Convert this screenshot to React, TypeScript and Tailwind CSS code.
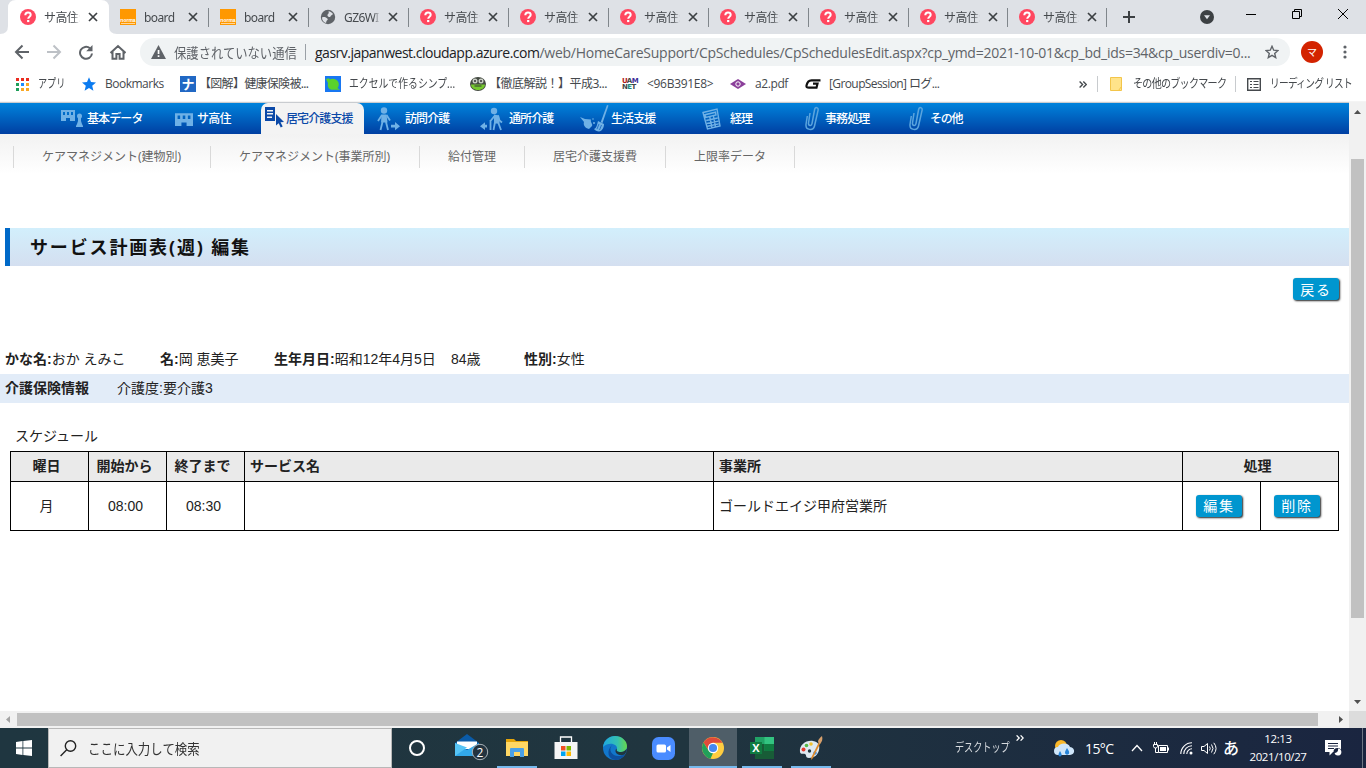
import type { ReactNode } from "react";

type Favicon = "help" | "board" | "globe";

type Tab = { icon: Favicon; title: string; width: string };

const TABS: Tab[] = [
  { icon: "help", title: "サ高住:", width: "w-[100px]" },
  { icon: "board", title: "board", width: "w-[100px]" },
  { icon: "board", title: "board", width: "w-[100px]" },
  { icon: "globe", title: "GZ6WI", width: "w-[100px]" },
  { icon: "help", title: "サ高住:", width: "w-[100px]" },
  { icon: "help", title: "サ高住:", width: "w-[100px]" },
  { icon: "help", title: "サ高住:", width: "w-[100px]" },
  { icon: "help", title: "サ高住:", width: "w-[100px]" },
  { icon: "help", title: "サ高住:", width: "w-[100px]" },
  { icon: "help", title: "サ高住:", width: "w-[99px]" },
  { icon: "help", title: "サ高住:", width: "w-[99px]" },
];

const SUB_MENU = [
  { label: "ケアマネジメント(建物別)", width: "w-[197px]" },
  { label: "ケアマネジメント(事業所別)", width: "w-[209px]" },
  { label: "給付管理", width: "w-[105px]" },
  { label: "居宅介護支援費", width: "w-[141px]" },
  { label: "上限率データ", width: "w-[129px]" },
];

function FaviconIcon({ type }: { type: Favicon }) {
  if (type === "board") {
    return (
      <span className="flex h-4 w-4 shrink-0 flex-col items-center justify-end bg-[#ff9800] pb-[1px] font-['Liberation_Sans'] text-[5px] leading-[6px] font-bold text-white">
        <span>norma</span>
        <span className="h-px w-3.5 bg-[#ffd699]" />
      </span>
    );
  }
  if (type === "globe") {
    return (
      <svg width="16" height="16" viewBox="0 0 16 16" className="shrink-0">
        <circle cx="8" cy="8" r="7.2" fill="#5f6368" />
        <path d="M2 8.500c2-1 3.500-.3 5 .8 1.500 1 .5 2-.5 2.700l-.5 2C3.500 13.300 2 11.500 2 8.500zM8.500 2.200c2 .2 3.500 1.300 4.500 2.800-1 1.500-2 1-2.500 2.500C9.500 8.500 8 8 7.500 6.500 7 5 9.500 5 8.500 2.200z" fill="#dee1e6" />
      </svg>
    );
  }
  return (
    <svg width="16" height="16" viewBox="0 0 16 16" className="shrink-0">
      <circle cx="8" cy="8" r="8" fill="#ff4760" />
      <path d="M5.300 6.200C5.300 4.400 6.500 3.400 8 3.400s2.700 1 2.700 2.400c0 1.900-2.500 2-2.500 4" fill="none" stroke="#fff" strokeWidth="2" />
      <rect x="7.100" y="11" width="2.200" height="2.100" fill="#fff" />
    </svg>
  );
}

function CloseIcon() {
  return (
    <svg width="10" height="10" viewBox="0 0 10 10" className="shrink-0">
      <path d="M1 1l8 8M9 1L1 9" stroke="#3c4043" strokeWidth="1.700" />
    </svg>
  );
}

function TabStrip() {
  return (
    <div className="flex h-[34px] bg-[#dee1e6] pl-2 text-xs text-[#45494d]">
      {TABS.map((tab, i) => (
        <div key={i} className={`relative flex h-[34px] shrink-0 items-center pl-3 ${tab.width}`}>
          {i === 0 && (
            <svg width="117" height="34" viewBox="0 0 117 34" className="absolute top-0 -left-2">
              <path d="M0 34Q8 34 8 26V8Q8 0 16 0H101Q109 0 109 8V26Q109 34 117 34Z" fill="#fff" />
            </svg>
          )}
          {i > 1 && <span className="absolute top-2 left-0 h-[19px] w-px bg-[#80868b]" />}
          <span className="relative flex">
            <FaviconIcon type={tab.icon} />
          </span>
          <span className="relative ml-2 w-[36px] mask-r-from-82% mask-r-to-100% pt-0.5 leading-4 tracking-[-0.6px] whitespace-nowrap">
            {tab.title}
          </span>
          <span className="relative ml-2 flex">
            <CloseIcon />
          </span>
        </div>
      ))}
      <div className="flex flex-1 items-center">
        <span className="h-[19px] w-px bg-[#80868b]" />
        <svg width="12" height="12" viewBox="0 0 12 12" className="ml-4">
          <path d="M6 0v12M0 6h12" stroke="#3c4043" strokeWidth="2" />
        </svg>
        <svg width="14" height="14" viewBox="0 0 14 14" className="ml-[65px]">
          <circle cx="7" cy="7" r="7" fill="#3c4043" />
          <path d="M4 5.200h6L7 9.200z" fill="#dee1e6" />
        </svg>
        <svg width="104" height="12" viewBox="0 0 104 12" className="mb-1.5 ml-8 fill-none stroke-black" strokeWidth="1">
          <path d="M0 6.500h10M46.500 3.500h7v7h-7zM48.500 3.500v-2h7v7h-2M92 1l10 10M102 1l-10 10" />
        </svg>
      </div>
    </div>
  );
}

function Toolbar() {
  return (
    <div className="flex h-9 items-center pl-[14px]">
      <svg width="112" height="16" viewBox="0 0 112 16" fill="none" stroke="#5f6368" strokeWidth="2">
        <path d="M15 8H2M8.500 1.500L2 8l6.500 6.500" />
        <path d="M33 8h13M39.500 1.500L46 8l-6.500 6.500" stroke="#bdc1c6" />
        <path d="M76 4.300A6 6 0 1078 9.500" />
        <path d="M78.500 1v6.300h-6.300z" fill="#5f6368" stroke="none" />
        <path d="M98.500 7.500v7.300h3.900V10h3.200v4.800h3.900V7.500M96.500 9L104 2l7.500 7" />
      </svg>
      <div className="ml-[14px] flex h-7 w-[1150px] items-center rounded-full bg-[#f0f3f4] pl-[11px] text-[14px] text-[#5f6368]">
        <svg width="15" height="14" viewBox="0 0 15 14">
          <path d="M7.500 0L15 14H0z" fill="#5f6368" />
          <path d="M6.700 5h1.700v4H6.700zM6.700 10.300h1.700v1.600H6.700z" fill="#fff" />
        </svg>
        <span className="ml-2 w-[123px] origin-left scale-x-[.88] whitespace-nowrap">保護されていない通信</span>
        <span className="ml-2 h-4 w-px bg-[#9aa0a6]" />
        <span className="ml-[9px] w-[935px] font-['Open_Sans'] text-[14px] tracking-[-0.26px] whitespace-nowrap">
          <span className="tracking-[-0.5px] text-[#202124]">gasrv.japanwest.cloudapp.azure.com</span>
          /web/HomeCareSupport/CpSchedules/CpSchedulesEdit.aspx?cp_ymd=2021-10-01&amp;cp_bd_ids=34&amp;cp_userdiv=0...
        </span>
        <svg width="14" height="14" viewBox="0 0 14 14" className="ml-[15px]" fill="none" stroke="#5f6368" strokeWidth="1.400">
          <path d="M7 1.300l1.700 3.900 4.200.4-3.200 2.800 1 4.200L7 10.400l-3.700 2.200 1-4.200L1.100 5.600l4.200-.4z" />
        </svg>
      </div>
      <span className="ml-[11px] flex h-[22px] w-[22px] items-center justify-center rounded-full bg-[#d32300] text-[10px] text-white">マ</span>
      <svg width="4" height="14" viewBox="0 0 4 14" className="ml-5" fill="#5f6368">
        <circle cx="2" cy="2" r="1.600" />
        <circle cx="2" cy="7" r="1.600" />
        <circle cx="2" cy="12" r="1.600" />
      </svg>
    </div>
  );
}

function Bookmark({ icon, label, width, text = "" }: { icon: ReactNode; label: string; width: string; text?: string }) {
  return (
    <div className={`flex shrink-0 items-center gap-2 whitespace-nowrap ${width}`}>
      <span className="flex w-4 shrink-0 justify-center">{icon}</span>
      <span className={text}>{label}</span>
    </div>
  );
}

function BookmarksBar() {
  return (
    <div className="flex h-8 items-center border-b border-[#f4f4f4] pb-[3px] pl-[14px] text-xs text-[#45494d]">
      <Bookmark
        width="w-[67px]"
        text="origin-left scale-x-[.76]"
        label="アプリ"
        icon={
          <svg width="13" height="13" viewBox="0 0 13 13">
            <path d="M0 0h3v3H0zM5 0h3v3H5zM10 0h3v3h-3z" fill="#ea2b1f" />
            <path d="M0 5h3v3H0zM0 10h3v3H0z" fill="#1e9e5a" />
            <path d="M5 5h3v3H5z" fill="#1a8cff" />
            <path d="M10 5h3v3h-3zM5 10h3v3H5zM10 10h3v3h-3z" fill="#f9a825" />
          </svg>
        }
      />
      <Bookmark
        width="w-[99px]"
        text="font-['Open_Sans'] tracking-[-0.5px]"
        label="Bookmarks"
        icon={
          <svg width="14" height="14" viewBox="0 0 14 14">
            <path d="M7 .3l2 4.800 5 .4-3.800 3.300 1.200 5L7 11.100l-4.400 2.700 1.200-5L0 5.500l5-.4z" fill="#0b7bf0" />
          </svg>
        }
      />
      <Bookmark
        width="w-[145px]"
        text="-ml-[5px] tracking-[-0.7px]"
        label="【図解】健康保険被..."
        icon={<span className="flex h-4 w-4 items-center justify-center bg-[#2168c4] text-[13px] leading-4 font-bold text-white">ナ</span>}
      />
      <Bookmark
        width="w-[145px]"
        text="origin-left scale-x-[.82]"
        label="エクセルで作るシンプ..."
        icon={
          <svg width="16" height="16" viewBox="0 0 16 16">
            <path d="M0 0h16v16H0z" fill="#1877f2" />
            <path d="M1 3l3-.8.800 1.300C7 2 12 2.500 13.500 6.500c.8 2.500 0 4.500-1 5.500l2.500 1.800H8C4 14 2 11 3 7z" fill="#5ad22b" />
          </svg>
        }
      />
      <Bookmark
        width="w-[152px]"
        text="-ml-[5px] tracking-[-0.5px]"
        label="【徹底解説！】平成3..."
        icon={
          <svg width="16" height="14" viewBox="0 0 16 14">
            <ellipse cx="8" cy="7" rx="8" ry="7" fill="#444a41" />
            <circle cx="5" cy="4" r="2.500" fill="#c9cec5" />
            <circle cx="11" cy="4" r="2.500" fill="#c9cec5" />
            <path d="M1 7.500h14c0 3-3 5.500-7 5.500S1 10.500 1 7.500z" fill="#75c92e" />
            <path d="M4.500 8.500h7v1h-7z" fill="#333" />
            <circle cx="5" cy="4" r="1" fill="#333" />
            <circle cx="11" cy="4" r="1" fill="#333" />
          </svg>
        }
      />
      <Bookmark
        width="w-[108px]"
        text="ml-px font-['Open_Sans'] tracking-[-0.3px]"
        label="<96B391E8>"
        icon={
          <span className="flex flex-col font-['DejaVu_Sans'] text-[7px] leading-[6px] font-bold tracking-[-0.6px] text-[#444]">
            <span><span className="text-[#b01818]">U</span>A<span className="text-[#3d2d9a]">M</span></span>
            <span>N<span className="text-[#178a7c]">E</span>T</span>
          </span>
        }
      />
      <Bookmark
        width="w-[75px]"
        text="ml-px font-['Open_Sans'] tracking-[-0.4px]"
        label="a2.pdf"
        icon={
          <svg width="16" height="10" viewBox="0 0 16 10">
            <path d="M0 5l8-5 8 5-8 5z" fill="#8b3f9a" />
            <circle cx="8" cy="5" r="2.200" fill="none" stroke="#fff" strokeWidth="1" />
          </svg>
        }
      />
      <Bookmark
        width="w-[274px]"
        text="font-['Open_Sans','Noto_Sans_CJK_JP'] tracking-[-0.6px]"
        label="[GroupSession] ログ..."
        icon={
          <svg width="16" height="10" viewBox="0 0 16 10">
            <path d="M15.500 1.300H6.500C3.500 1.300 2 4 1.500 6.500 1.200 8.200 2 8.700 4 8.700h7.500l1-4H8" fill="none" stroke="#111" strokeWidth="2.200" />
          </svg>
        }
      />
      <svg width="8" height="7" viewBox="0 0 8 7" className="mr-[10px]" fill="none" stroke="#45494d" strokeWidth="1.400">
        <path d="M.6.500l3 3-3 3M4.300.500l3 3-3 3" />
      </svg>
      <span className="h-4 w-px bg-[#c8cbce]" />
      <svg width="12" height="14" viewBox="0 0 12 14" className="ml-3">
        <path d="M.5.500h11v13H.5z" fill="#ffe38a" stroke="#f3c54a" />
        <path d="M8.500 13.500l3-4" stroke="#f3c54a" />
      </svg>
      <span className="ml-[11px] w-[93px] origin-left scale-x-[.84] tracking-[-0.9px] whitespace-nowrap">その他のブックマーク</span>
      <span className="ml-[9px] h-4 w-px bg-[#c8cbce]" />
      <svg width="14" height="13" viewBox="0 0 14 13" className="ml-[11px]" fill="none" stroke="#45494d">
        <path d="M.7.700h12.600v11.600H.7z" strokeWidth="1.400" />
        <path d="M3 3.500h2M3 6.500h2M3 9.500h2M6.500 3.500h5M6.500 6.500h5M6.500 9.500h5" strokeWidth="1.200" />
      </svg>
      <span className="ml-[9px] w-[82px] origin-left scale-x-[.81] tracking-[-0.9px] whitespace-nowrap">リーディング リスト</span>
    </div>
  );
}

function NavItem({ width, pad, icon, label, text = "", active = false }: {
  width: string;
  pad: string;
  icon: ReactNode;
  label: string;
  text?: string;
  active?: boolean;
}) {
  return (
    <div className={`flex h-[31px] shrink-0 items-center ${width} ${active ? "rounded-t-[7px] bg-[#f3f3f3] pl-1 text-[#0b49a8]" : "text-white"}`}>
      <span className={`flex shrink-0 ${pad}`}>{icon}</span>
      <span className={`whitespace-nowrap ${text}`}>{label}</span>
    </div>
  );
}

function BuildingShape() {
  return <path d="M0 1h14v11h-5V9H5v3H0zM2 3v3h2V3zM6 3v3h2V3zM10 3v3h2V3z" fillRule="evenodd" />;
}

function ClipIcon() {
  return (
    <svg width="14" height="25" viewBox="0 0 14 25" fill="none" stroke="#5ba5de" strokeWidth="1.500">
      <path d="M5 7L3.500 17c-.4 3 3 3.500 3.500.7L9.500 4c.6-3.500 4.500-3 3.500.7L9.500 20c-1.200 5-9 4.500-8.500-1.500L2.300 10" />
    </svg>
  );
}

function MainNav() {
  return (
    <div className="flex h-8 items-start border-t border-[#c9ccd0] bg-linear-to-b from-[#0083dc] to-[#003fa2] pl-[61px] text-xs font-medium">
      <NavItem
        width="w-[114px]"
        pad="w-[26px]"
        label="基本データ"
        text="tracking-[-0.9px]"
        icon={
          <svg width="23" height="19" viewBox="0 0 23 19" fill="#6fb1e6">
            <BuildingShape />
            <circle cx="18.500" cy="7" r="2.500" />
            <path d="M17 9h3v3l1 3 1 2v1h-7v-1l1-2 1-3z" />
          </svg>
        }
      />
      <NavItem
        width="w-[86px]"
        pad="w-[22px]"
        label="サ高住"
        text="tracking-[-0.7px]"
        icon={
          <svg width="18" height="14" viewBox="0 0 14 12" preserveAspectRatio="none" fill="#6fb1e6">
            <BuildingShape />
          </svg>
        }
      />
      <NavItem
        active
        width="w-[103px] mr-[13px]"
        pad="w-[21px]"
        label="居宅介護支援"
        text="tracking-[-0.9px]"
        icon={
          <svg width="20" height="22" viewBox="0 0 20 22" className="mb-1" fill="#0b49a8">
            <path d="M0 1h10v14H0zM2 4v1.500h6V4zM2 7v1.500h6V7zM2 10.500V12h5v-1.500z" fillRule="evenodd" />
            <path d="M11 8l8 8-3.500.3 2.200 4.200-2 1-2-4.300L11 19.500z" />
          </svg>
        }
      />
      <NavItem
        width="w-[103px]"
        pad="w-[28px]"
        label="訪問介護"
        text="tracking-[-0.9px]"
        icon={
          <svg width="23" height="24" viewBox="0 0 23 24" fill="none" stroke="#6fb1e6" strokeWidth="1.800">
            <circle cx="7" cy="3.500" r="3.200" fill="#6fb1e6" stroke="none" />
            <path d="M4.500 7.500h5l1 8H4z" fill="#6fb1e6" stroke="none" />
            <path d="M5 8l-4 6M9.500 8l3.500 5.500M5.500 15l-2 8M9 15l2 8" />
            <path d="M14 17.800h4v-2.800l5 4.200-5 4v-2.700h-4z" fill="#6fb1e6" stroke="none" />
          </svg>
        }
      />
      <NavItem
        width="w-[102px]"
        pad="w-[29px]"
        label="通所介護"
        text="tracking-[-0.9px]"
        icon={
          <svg width="23" height="24" viewBox="0 0 23 24" fill="none" stroke="#6fb1e6" strokeWidth="1.800">
            <circle cx="14" cy="4" r="3.200" fill="#6fb1e6" stroke="none" />
            <path d="M14 7.500l5 1 .5 8h-5.500z" fill="#6fb1e6" stroke="none" />
            <path d="M14.500 9l-4 5M18 8.500l1.500 5 2.500 2M15 15l-1.500 8M18 15l3 8M10.500 13v10" />
            <path d="M7 17.800H5v-2.500l-5 3.900 5 3.800v-2.500h2z" fill="#6fb1e6" stroke="none" />
          </svg>
        }
      />
      <NavItem
        width="w-[120px]"
        pad="w-[29px]"
        label="生活支援"
        text="tracking-[-0.9px]"
        icon={
          <svg width="29" height="27" viewBox="0 0 29 27" className="-ml-0.5 shrink-0" fill="#6fb1e6">
            <path d="M0 12l5 2 6 .5c-1 3 2 4 1 6.500l-3 3C5 23 3 20 4 17z" />
            <circle cx="14" cy="18" r="1" />
            <circle cx="13" cy="14" r=".8" />
            <path d="M27 0l1.500.5L22.500 18l-1.800-.7z" />
            <path d="M18 16l6 3c0 4-2 7-5 7.500-2 0-4-1-5-2.500 3-1 3-5 4-8z" />
            <path d="M19 19l-2 5M21.500 20l-2 5" stroke="#0859b9" strokeWidth=".7" />
          </svg>
        }
      />
      <NavItem
        width="w-[103px]"
        pad="w-[28px]"
        label="経理"
        text="tracking-[-0.9px]"
        icon={
          <svg width="19" height="22" viewBox="0 0 19 22" fill="none" stroke="#6fb1e6" strokeWidth="1.400">
            <path d="M1 4.500l14-3.500 3 17L5.500 21zM3 6.700l10.500-2.500.5 2.800L3.800 9.500zM4.200 12.500l11.500-2.500M4.800 15.500l11.500-2.400M5.300 18.300l11.500-2.400M7.800 9l2.200 11M11.500 8.200l2 11" />
          </svg>
        }
      />
      <NavItem width="w-[104px]" pad="w-[20px]" label="事務処理" text="tracking-[-0.9px]" icon={<ClipIcon />} />
      <NavItem width="w-[60px]" pad="w-[21px]" label="その他" text="tracking-[-1.2px]" icon={<ClipIcon />} />
    </div>
  );
}

function SubNav() {
  return (
    <div className="flex h-10 items-center bg-linear-to-b from-[#f2f2f2] to-white pt-1.5 pl-[13px] text-xs text-[#666]">
      {SUB_MENU.map((item) => (
        <div key={item.label} className={`flex h-[22px] items-center border-l border-[#d9d9d9] pl-7 ${item.width}`}>
          <span className="whitespace-nowrap">{item.label}</span>
        </div>
      ))}
      <div className="h-[22px] w-px bg-[#d9d9d9]" />
    </div>
  );
}

function PageButton({ label }: { label: string }) {
  return (
    <button className="h-[22px] w-[46px] rounded-[3px] bg-[#0096cf] text-sm leading-[21px] tracking-[1.8px] text-white shadow-[1px_1px_2px_#222]">
      {label}
    </button>
  );
}

function SchedulePage() {
  return (
    <div className="flex h-[608px] w-[1349px] flex-col overflow-hidden bg-white text-[#222]">
      <MainNav />
      <SubNav />
      <h1 className="mt-[54px] ml-[5px] flex h-[38px] shrink-0 items-center border-l-5 border-[#0069c8] bg-linear-to-b from-[#d2effc] to-[#d4dff0] pl-5 text-lg font-bold tracking-[1.850px] text-[#111]">
        サービス計画表(週) 編集
      </h1>
      <div className="mt-3 flex justify-end pr-[10px]">
        <PageButton label="戻る" />
      </div>
      <div className="mt-[44px] flex h-[30px] shrink-0 items-center pl-[5px] font-['Liberation_Sans','Noto_Sans_CJK_JP',sans-serif] text-sm whitespace-nowrap">
        <div className="w-[155px]"><b>かな名:</b>おか えみこ</div>
        <div className="w-[114px]"><b>名:</b>岡 恵美子</div>
        <div className="w-[177px]"><b>生年月日:</b>昭和12年4月5日</div>
        <div className="w-[73px]">84歳</div>
        <div><b>性別:</b>女性</div>
      </div>
      <div className="flex h-[29px] shrink-0 items-center bg-[#e2ecf8] pb-0.5 pl-[5px] font-['Liberation_Sans','Noto_Sans_CJK_JP',sans-serif] text-sm">
        <b className="w-28">介護保険情報</b>
        <span>介護度:要介護3</span>
      </div>
      <div className="mt-[22px] pl-[15px] text-sm leading-[22px]">スケジュール</div>
      <table className="mt-1 ml-[10px] w-[1329px] table-fixed border-collapse font-['Liberation_Sans','Noto_Sans_CJK_JP',sans-serif] text-sm leading-5">
        <colgroup>
          <col className="w-[78px]" />
          <col className="w-[78px]" />
          <col className="w-[78px]" />
          <col className="w-[469px]" />
          <col className="w-[469px]" />
          <col className="w-[78px]" />
          <col className="w-[78px]" />
        </colgroup>
        <thead>
          <tr className="h-[30px] bg-[#eaeaea]">
            <th className="border border-black pr-1.5 pb-0.5">曜日</th>
            <th className="border border-black pr-1.5 pb-0.5">開始から</th>
            <th className="border border-black pr-1.5 pb-0.5">終了まで</th>
            <th className="border border-black pb-0.5 pl-[5px] text-left">サービス名</th>
            <th className="border border-black pb-0.5 pl-[5px] text-left">事業所</th>
            <th className="border border-black pr-1.5 pb-0.5" colSpan={2}>処理</th>
          </tr>
        </thead>
        <tbody>
          <tr className="h-[49px] text-center">
            <td className="border border-black pr-1.5">月</td>
            <td className="border border-black pr-1">08:00</td>
            <td className="border border-black pr-1">08:30</td>
            <td className="border border-black" />
            <td className="border border-black pl-[5px] text-left">ゴールドエイジ甲府営業所</td>
            <td className="border border-black pr-[5px]"><PageButton label="編集" /></td>
            <td className="border border-black pr-[5px]"><PageButton label="削除" /></td>
          </tr>
        </tbody>
      </table>
    </div>
  );
}

function VerticalScrollbar() {
  return (
    <div className="flex h-[609px] w-[17px] flex-col items-center bg-[#f1f1f1] pt-2">
      <svg width="7" height="4" viewBox="0 0 7 4"><path d="M3.500 0L7 4H0z" fill="#505050" /></svg>
      <div className="mt-[45px] h-[459px] w-[13px] bg-[#c1c1c1]" />
      <svg width="7" height="4" viewBox="0 0 7 4" className="mt-[82px]"><path d="M3.500 4L7 0H0z" fill="#505050" /></svg>
    </div>
  );
}

function HorizontalScrollbar() {
  return (
    <div className="flex h-[17px] items-center bg-[#f1f1f1]">
      <svg width="4" height="7" viewBox="0 0 4 7" className="ml-1.5"><path d="M0 3.500L4 0v7z" fill="#a3a3a3" /></svg>
      <div className="ml-[7px] h-[13px] w-[1301px] bg-[#c1c1c1]" />
      <svg width="4" height="7" viewBox="0 0 4 7" className="ml-[21px]"><path d="M4 3.500L0 0v7z" fill="#505050" /></svg>
      <div className="ml-auto h-[17px] w-[17px] bg-[#dcdcdc]" />
    </div>
  );
}

function TaskButton({ children, active = false, running = false }: { children: ReactNode; active?: boolean; running?: boolean }) {
  return (
    <div className="flex h-10 w-[49px] justify-center">
      <div className={`relative flex h-10 items-center justify-center ${active ? "w-12 bg-[#4f5e68]" : "w-10"}`}>
        {children}
        {(active || running) && <span className="absolute bottom-0 left-0 h-0.5 w-full bg-[#76b9ed]" />}
      </div>
    </div>
  );
}

function Taskbar() {
  return (
    <div className="flex h-10 items-center bg-linear-to-r from-[#1f3640] via-[#20353f] to-[#1a2540] text-white">
      <div className="flex w-12 justify-center">
        <svg width="16" height="16" viewBox="0 0 16 16" fill="#fff">
          <path d="M0 2l6.500-1v6.600H0zM7.300.900L16 0v7.600H7.300zM0 8.400h6.500V15L0 14zM7.300 8.400H16V16l-8.700-1z" />
        </svg>
      </div>
      <div className="flex h-10 w-[344px] items-center border border-[#b8b8b8] bg-[#f1f1f1] pl-[11px] text-[#333]">
        <svg width="17" height="17" viewBox="0 0 17 17" fill="none" stroke="#222" strokeWidth="1.400">
          <circle cx="10.500" cy="6" r="5.200" />
          <path d="M6.700 9.800L.6 16" />
        </svg>
        <span className="ml-[11px] origin-left scale-x-[.89] text-[14px] whitespace-nowrap">ここに入力して検索</span>
      </div>
      <TaskButton>
        <span className="h-4 w-4 rounded-full border-[2.500px] border-white" />
      </TaskButton>
      <div className="w-0.5" />
      <TaskButton>
        <svg width="34" height="30" viewBox="0 0 34 30" className="ml-2 shrink-0">
          <path d="M0 10L12 1l12 9v13H0z" fill="#0a5ba8" />
          <path d="M2 8.500h20V16H2z" fill="#fff" />
          <path d="M0 10l12 7 12-7v13H0z" fill="#32a9ea" />
          <path d="M12 14.500L0 23V10z" fill="#56c4f5" />
          <circle cx="25" cy="19" r="7.700" fill="#22333f" stroke="#a8b2b8" />
          <text x="25" y="23.500" textAnchor="middle" fontSize="12" fontFamily="Open Sans" fill="#fff">2</text>
        </svg>
      </TaskButton>
      <TaskButton running>
        <svg width="22" height="20" viewBox="0 0 22 20">
          <path d="M0 1h8l2 2h12v15H0z" fill="#e5a50a" />
          <path d="M0 4h22v14H0z" fill="#ffd764" />
          <path d="M4 11q0-1 1-1h12q1 0 1 1v8h-4v-5H8v5H4z" fill="#4aa0e6" />
        </svg>
      </TaskButton>
      <TaskButton>
        <svg width="24" height="24" viewBox="0 0 24 24">
          <path d="M6.500 7V1h11v6" fill="none" stroke="#fff" strokeWidth="1.300" />
          <path d="M.5 6h23v17H.5z" fill="#f5f5f5" />
          <path d="M7 10h4.500v4.500H7z" fill="#f25022" />
          <path d="M12.500 10H17v4.500h-4.500z" fill="#7fba00" />
          <path d="M7 15.500h4.500V20H7z" fill="#00a4ef" />
          <path d="M12.500 15.500H17V20h-4.500z" fill="#ffb900" />
        </svg>
      </TaskButton>
      <TaskButton>
        <svg width="24" height="24" viewBox="0 0 24 24">
          <defs>
            <linearGradient id="edgeTop" x1="0" x2="1">
              <stop offset="0" stopColor="#1fa8e0" />
              <stop offset=".6" stopColor="#35c1b1" />
              <stop offset="1" stopColor="#66d84b" />
            </linearGradient>
          </defs>
          <circle cx="12" cy="12" r="12" fill="#1277cb" />
          <path d="M0 11C1 4 6 0 12 0c7 0 12 5 12 10 0 4-3 6-6 6-4 0-5-1-4-3 1-5-8-8-14-2z" fill="url(#edgeTop)" />
          <path d="M9 9c-4 5 0 11 6 11 3 0 5-.5 7-2-2 4-6 6-10 6C5 23 3 15 9 9z" fill="#0d4f9e" />
          <path d="M14 12.500c-1 2 0 3.500 4 3.500 2 0 4-1 5.500-3 .5 0 .5 3-2 5.500-5 2-9.500-1-9-4 .2-1 .7-1.500 1.500-2z" fill="#20353f" />
        </svg>
      </TaskButton>
      <TaskButton>
        <svg width="23" height="23" viewBox="0 0 23 23">
          <rect width="23" height="23" rx="6.500" fill="#4a8cff" />
          <rect x="4.500" y="7.500" width="9.500" height="8" rx="1.500" fill="#fff" />
          <path d="M15 10.500l3.500-2.500v7L15 12.500z" fill="#fff" />
        </svg>
      </TaskButton>
      <TaskButton active>
        <svg width="22" height="22" viewBox="0 0 22 22">
          <circle cx="11" cy="11" r="11" fill="#ffcd40" />
          <path d="M1.500 5.500A11 11 0 0120.500 5.800H11L6.600 13.500z" fill="#e04a3a" />
          <path d="M1.500 5.500L6.500 13.500 11 16l-2.500 5.700A11 11 0 011.500 5.500z" fill="#22a05a" />
          <circle cx="11" cy="11" r="5.200" fill="#fff" />
          <circle cx="11" cy="11" r="4.100" fill="#4688f1" />
        </svg>
      </TaskButton>
      <TaskButton running>
        <svg width="24" height="22" viewBox="0 0 24 22">
          <path d="M5 0h19v22H5z" fill="#21a366" />
          <path d="M14.500 0H24v7h-9.500z" fill="#33c481" />
          <path d="M5 7h9.500v7H5zM5 14h19v8H5z" fill="#185c37" />
          <path d="M14.500 7H24v7h-9.500z" fill="#107c41" />
          <path d="M0 5h12v12H0z" fill="#107c41" />
          <text x="6" y="14.800" textAnchor="middle" fontSize="11" fontWeight="bold" fontFamily="Open Sans" fill="#fff">X</text>
        </svg>
        <span className="absolute right-0 bottom-0 h-0.5 w-2 border-l border-[#20353f] bg-[#55819f]" />
      </TaskButton>
      <TaskButton running>
        <svg width="24" height="24" viewBox="0 0 24 24">
          <path d="M1 16C0 9 7 4 14 5c6 1 7 5 6 9-1 5-5 8-10 8-4 0-2-3-4-4s-4 1-5-2z" fill="#dfe9f1" />
          <circle cx="4.500" cy="13.500" r="2" fill="#e63c2e" />
          <circle cx="7.500" cy="9.500" r="1.800" fill="#54b948" />
          <circle cx="12" cy="8" r="1.800" fill="#f2c230" />
          <circle cx="16" cy="17" r="1.800" fill="#3b8ede" />
          <circle cx="10.500" cy="15" r="1.700" fill="#20353f" />
          <path d="M20 6l1.500 1L14 22l-2 2 .5-3z" fill="#e08a2b" />
          <path d="M19 6c0-3 2-4 4-6 1 3 0 6-2 8z" fill="#d7a06c" />
        </svg>
      </TaskButton>
      <span className="ml-[120px] w-[53px] origin-left scale-x-[.76] text-xs whitespace-nowrap text-[#d7dbdf]">デスクトップ</span>
      <svg width="8" height="6" viewBox="0 0 8 6" className="mb-5 ml-2" fill="none" stroke="#fff" strokeWidth="1.300">
        <path d="M.6.400L3.200 3 .6 5.600M4.600.400L7.200 3 4.600 5.600" />
      </svg>
      <div className="ml-auto flex items-center">
        <svg width="21" height="17" viewBox="0 0 21 17">
          <circle cx="7" cy="6" r="6" fill="#fbb829" />
          <path d="M4 15a4 4 0 010-8c1-4 10-5 12 0 6 1 5 8 0 8z" fill="#cfe6fa" />
          <path d="M13 8c2 3 2.500 4 2 5.500-.8 1.800-4 1.500-4-1C11 11 12 10 13 8zM6 11c1 2 2 3 1.500 4.500-1 1.500-3 1-3-.7C4.500 13.500 5 13 6 11z" fill="#2684d9" />
        </svg>
        <span className="ml-[10px] w-[30px] font-['Open_Sans','Noto_Sans_CJK_JP'] text-[14px] tracking-[-0.6px] whitespace-nowrap">15°C</span>
        <svg width="12" height="8" viewBox="0 0 12 8" className="ml-4" fill="none" stroke="#fff" strokeWidth="1.300"><path d="M1 7l5-5.500L11 7" /></svg>
        <svg width="16" height="12" viewBox="0 0 16 12" className="ml-[10px]" fill="none" stroke="#fff">
          <path d="M5.500 3.500h9v7h-9zM15.500 5.500v3M.5 2.500h4v2q0 1.500-2 1.500t-2-1.500zM1.500 0v2.500M3.500 0v2.500M2.500 6v4.500h3" />
          <path d="M7 5h6v4H7z" fill="#fff" stroke="none" />
        </svg>
        <svg width="13" height="13" viewBox="0 0 13 13" className="ml-[11px]" fill="none" stroke="#fff">
          <path d="M.8 12A11.200 11.200 0 0112 .8M3.800 12A8.200 8.200 0 0112 3.800M6.800 12A5.200 5.200 0 0112 6.800" strokeWidth="1.100" />
          <circle cx="11" cy="11" r="1.500" fill="#fff" stroke="none" />
        </svg>
        <svg width="16" height="13" viewBox="0 0 16 13" className="ml-2" fill="none" stroke="#fff">
          <path d="M.5 4.500h2.500l3.500-3v10L3 8.500H.5zM8.500 4.500q1.500 2 0 4M10.500 2.500q3 4 0 8M12.800.800q4.500 5.700 0 11.400" />
        </svg>
        <span className="ml-1.5 w-4 text-base leading-5 font-medium">あ</span>
        <div className="ml-[9px] w-[60px] text-center font-['Open_Sans'] text-[11.500px] leading-[18px] tracking-[-0.4px]">
          <div>12:13</div>
          <div>2021/10/27</div>
        </div>
        <svg width="17" height="16" viewBox="0 0 17 16" className="mr-5 ml-[17px]">
          <path d="M0 0h16v12H8l-3.500 3.500V12H0z" fill="#fff" />
          <path d="M3 3.500h10M3 6h10M3 8.500h6" stroke="#1a2540" />
          <circle cx="12.500" cy="12" r="4" fill="#1a2540" />
          <path d="M13 8.500a3.500 3.500 0 11-3.500 4.500C12 13 13.500 11 13 8.500z" fill="#fff" />
        </svg>
        <span className="mr-[3px] h-10 w-px bg-[#6d7683]" />
      </div>
    </div>
  );
}

export default function App() {
  return (
    <div className="flex h-[768px] w-[1366px] flex-col overflow-hidden bg-white font-['Noto_Sans','Noto_Sans_CJK_JP',sans-serif]">
      <TabStrip />
      <Toolbar />
      <BookmarksBar />
      <div className="flex h-[609px]">
        <SchedulePage />
        <VerticalScrollbar />
      </div>
      <HorizontalScrollbar />
      <Taskbar />
    </div>
  );
}
